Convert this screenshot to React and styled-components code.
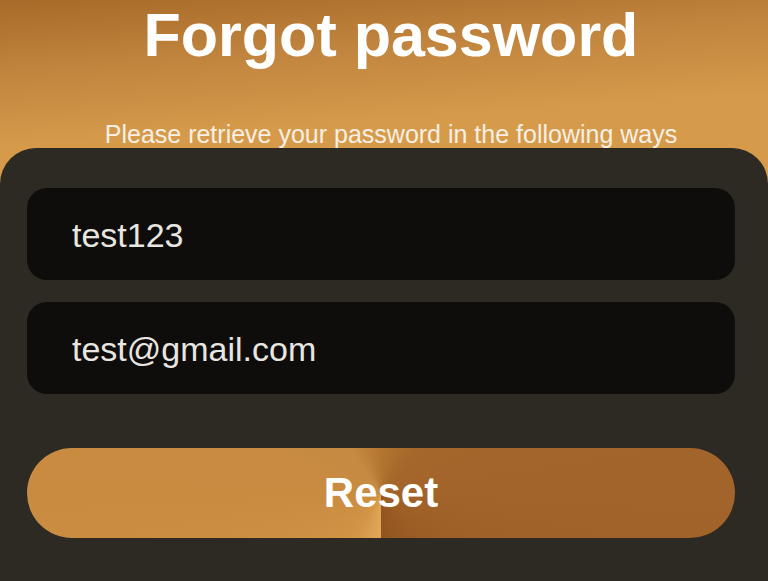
import styled, { createGlobalStyle } from "styled-components"

const GlobalStyle = createGlobalStyle`
    html, body {
        margin: 0;
        padding: 0;
        height: 100%;
    }
    body {
        font-family: "Liberation Sans", Helvetica, Arial, sans-serif;
        background-color: #2d2a23;
    }
    * {
        box-sizing: border-box;
    }
`

const Page = styled.div`
    display: flex;
    flex-direction: column;
    height: 100vh;
    overflow: hidden;
    background: linear-gradient(176deg, #a86a28 0px, #c0843e 70px, #d69b4a 150px, #d69b4a 100%);
`

const Header = styled.header`
    display: flex;
    flex-direction: column;
    align-items: center;
    padding-left: 14px;
`

const Title = styled.h1`
    margin: 0;
    font-size: 61px;
    line-height: 70px;
    font-weight: 700;
    color: #fff;
`

const Subtitle = styled.p`
    margin: 50px 0 0;
    font-size: 25px;
    line-height: 28px;
    color: #f7efe4;
`

const Panel = styled.section`
    flex: 1;
    display: flex;
    flex-direction: column;
    gap: 22px;
    padding: 40px 33px 0 27px;
    background-color: #2d2a23;
    border-radius: 36px 36px 0 0;
`

const Field = styled.input`
    height: 92px;
    width: 100%;
    padding: 2px 45px 0;
    border: none;
    border-radius: 20px;
    background-color: #0e0d0b;
    color: #e8e6e1;
    font-family: inherit;
    font-size: 34px;
    &:focus {
        outline: none;
    }
`

const ResetButton = styled.button`
    margin-top: 32px;
    height: 90px;
    width: 100%;
    border: none;
    border-radius: 45px;
    background: conic-gradient(
        from 180deg at 50% 50%,
        #e2a756 0deg,
        #d19446 35deg,
        #c98b40 90deg,
        #c68a43 145deg,
        #b3752f 180deg,
        #a5672b 220deg,
        #a2642a 270deg,
        #9b5d24 320deg,
        #93551f 360deg
    );
    color: #fff;
    font-family: inherit;
    font-size: 42px;
    font-weight: 700;
    cursor: pointer;
`

export default function App() {
    return (
        <>
            <GlobalStyle />
            <Page>
                <Header>
                    <Title>Forgot password</Title>
                    <Subtitle>Please retrieve your password in the following ways</Subtitle>
                </Header>
                <Panel>
                    <Field type="text" defaultValue="test123" />
                    <Field type="email" defaultValue="test@gmail.com" />
                    <ResetButton>Reset</ResetButton>
                </Panel>
            </Page>
        </>
    )
}
